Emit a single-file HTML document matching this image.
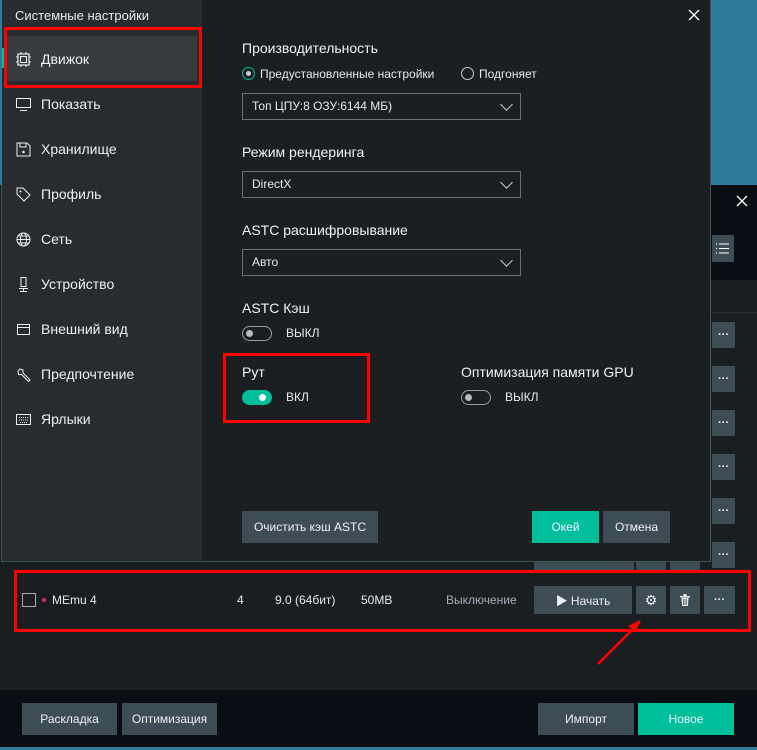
<!DOCTYPE html>
<html><head><meta charset="utf-8"><style>
*{margin:0;padding:0;box-sizing:border-box}
body{width:757px;height:750px;overflow:hidden;background:#1a1e21;font-family:"Liberation Sans","Noto Sans CJK SC",sans-serif;color:#e8eaeb;position:relative;font-size:13px}
.abs{position:absolute}
.btn{position:absolute;background:#3d4d56;color:#eef;display:flex;align-items:center;justify-content:center;font-size:12px}
.dots{width:23px;height:26px;left:712px;font-weight:bold;font-size:11px}
.nav{position:absolute;left:16px;display:flex;align-items:center;font-size:14px;color:#eef0f1}
.nav svg{margin-right:10px}
.lbl{position:absolute;font-size:14px;color:#f0f2f3}
.sel{position:absolute;left:242px;width:279px;height:27px;border:1px solid #6a6f73;font-size:12px;padding-left:9px;line-height:25px}
.sel:after{content:"";position:absolute;right:9px;top:6px;width:8px;height:8px;border-right:1.3px solid #ccc;border-bottom:1.3px solid #ccc;transform:rotate(45deg)}
.tog{position:absolute;width:30px;height:15px;border:1.5px solid #9a9ea1;border-radius:8px}
.tog i{position:absolute;left:3px;top:2.5px;width:7px;height:7px;border-radius:50%;background:#bbb}
.red{position:absolute;border:3px solid #f00}
</style></head><body>
<div class="abs" style="left:711px;top:0;width:46px;height:185px;background:#2e7b9a"></div>
<div class="abs" style="left:711px;top:185px;width:46px;height:95px;background:#0a0e14"></div>
<svg class="abs" style="left:736px;top:195px" width="12" height="12"><path d="M1 1L11 11M11 1L1 11" stroke="#fff" stroke-width="1.3"/></svg>
<div class="abs" style="left:712px;top:235px;width:22px;height:27px;background:#3d4d56"><svg width="22" height="27"><path d="M4 9h1M4 13.5h1M4 18h1" stroke="#fff" stroke-width="1.2"/><path d="M7 9h10M7 13.5h10M7 18h10" stroke="#fff" stroke-width="1"/></svg></div>
<div class="abs" style="left:711px;top:312px;width:46px;height:1px;background:#2a2f33"></div>
<div class="btn dots" style="top:322px">···</div>
<div class="btn dots" style="top:366px">···</div>
<div class="btn dots" style="top:410px">···</div>
<div class="btn dots" style="top:454px">···</div>
<div class="btn dots" style="top:498px">···</div>
<div class="btn dots" style="top:542px">···</div>
<div class="abs" style="left:534px;top:560px;width:100px;height:10px;background:#3d4d56"></div>
<div class="abs" style="left:636px;top:560px;width:30px;height:10px;background:#3d4d56"></div>
<div class="abs" style="left:670px;top:560px;width:30px;height:10px;background:#3d4d56"></div>

<div class="abs" style="left:22px;top:593px;width:14px;height:14px;border:1px solid #aaa"></div>
<div class="abs" style="left:42px;top:598px;width:4px;height:4px;border-radius:50%;background:#e0207a"></div>
<div class="abs" style="left:52px;top:593px;font-size:12px">MEmu 4</div>
<div class="abs" style="left:237px;top:593px;font-size:12px">4</div>
<div class="abs" style="left:275px;top:593px;font-size:12px">9.0 (64бит)</div>
<div class="abs" style="left:361px;top:593px;font-size:12px">50MB</div>
<div class="abs" style="left:446px;top:593px;font-size:12px;color:#aab">Выключение</div>
<div class="btn" style="left:534px;top:586px;width:98px;height:28px">▶&nbsp;Начать</div>
<div class="btn" style="left:636px;top:586px;width:30px;height:28px;font-size:14px">⚙</div>
<div class="btn" style="left:670px;top:586px;width:30px;height:28px"><svg width="10" height="12" viewBox="0 0 10 12"><rect x="0" y="2" width="10" height="1.5" fill="#eee"/><rect x="3.5" y="0" width="3" height="2" fill="#eee"/><path d="M1.5 4h7l-.6 8h-5.8z" fill="#eee"/><path d="M3.5 5v6M5 5v6M6.5 5v6" stroke="#3d4d56" stroke-width=".7"/></svg></div>
<div class="btn dots" style="left:704px;top:586px;width:31px;height:28px">···</div>
<div class="red" style="left:14px;top:570px;width:737px;height:62px"></div>
<svg class="abs" style="left:590px;top:612px" width="60" height="60"><path d="M8 52 L50 10" stroke="#f00" stroke-width="2.5"/><path d="M50 8 L38 14 L46 20z" fill="#f00"/></svg>

<div class="abs" style="left:0;top:690px;width:757px;height:57px;background:#0a0e14"></div>
<div class="abs" style="left:0;top:747px;width:757px;height:3px;background:#2e7b9a"></div>
<div class="btn" style="left:22px;top:703px;width:95px;height:32px">Раскладка</div>
<div class="btn" style="left:122px;top:703px;width:95px;height:32px">Оптимизация</div>
<div class="btn" style="left:538px;top:703px;width:96px;height:32px">Импорт</div>
<div class="btn" style="left:638px;top:703px;width:96px;height:32px;background:#00bf9a">Новое</div>

<div class="abs" style="left:1px;top:0;width:710px;height:562px;background:#1b1f22;border:1px solid #3a5a50;border-top:none"></div>
<div class="abs" style="left:2px;top:0;width:200px;height:561px;background:#282c30"></div>
<div class="abs" style="left:0;top:0;width:2px;height:185px;background:#2e7b9a"></div>
<div class="abs" style="left:15px;top:8px;font-size:13px">Системные настройки</div>
<div class="abs" style="left:7px;top:36px;width:190px;height:45px;background:#363b3f"></div>
<div class="abs" style="left:2px;top:48px;width:2px;height:20px;background:#00bf9a"></div>
<div class="red" style="left:4px;top:27px;width:198px;height:61px"></div>
<div class="nav" style="top:51px"><svg width="15" height="15"><rect x="2" y="2" width="11" height="11" fill="none" stroke="#eee" stroke-width="1.2"/><rect x="4.5" y="4.5" width="6" height="6" fill="none" stroke="#eee"/><path d="M0 5h2M0 10h2M13 5h2M13 10h2M5 0v2M10 0v2M5 13v2M10 13v2" stroke="#eee"/></svg>Движок</div>
<div class="nav" style="top:96px"><svg width="15" height="15"><rect x="0.5" y="1.5" width="14" height="9" fill="none" stroke="#eee"/><path d="M4 13.5h7" stroke="#eee"/></svg>Показать</div>
<div class="nav" style="top:141px"><svg width="15" height="15"><path d="M1 1h10l3 3v10H1z" fill="none" stroke="#eee"/><path d="M4 1v4h6V1" fill="none" stroke="#eee"/><circle cx="7.5" cy="10" r="1.3" fill="#eee"/></svg>Хранилище</div>
<div class="nav" style="top:186px"><svg width="15" height="15"><path d="M1 1h6l7 7-6 6-7-7z" fill="none" stroke="#eee"/><circle cx="4.5" cy="4.5" r="1" fill="#eee"/></svg>Профиль</div>
<div class="nav" style="top:231px"><svg width="15" height="15"><circle cx="7.5" cy="7.5" r="6.5" fill="none" stroke="#eee"/><ellipse cx="7.5" cy="7.5" rx="3" ry="6.5" fill="none" stroke="#eee"/><path d="M1 7.5h13M2 4h11M2 11h11" stroke="#eee"/></svg>Сеть</div>
<div class="nav" style="top:276px"><svg width="15" height="15"><rect x="5" y="0.5" width="5" height="9" fill="none" stroke="#eee"/><path d="M3 11.5h9M7.5 11.5v3M4 14.5h7" stroke="#eee"/></svg>Устройство</div>
<div class="nav" style="top:321px"><svg width="15" height="15"><rect x="1.5" y="2.5" width="12" height="10" fill="none" stroke="#eee"/><path d="M1.5 5.5h12" stroke="#eee"/></svg>Внешний вид</div>
<div class="nav" style="top:366px"><svg width="15" height="15"><path d="M2 4l2-2 3 1v3l7 7-1.5 1.5-7-7H2.5z" fill="none" stroke="#eee"/></svg>Предпочтение</div>
<div class="nav" style="top:411px"><svg width="15" height="15"><rect x="0.5" y="2.5" width="14" height="10" fill="none" stroke="#eee"/><path d="M3 5.5h9M3 8h9M4 10.5h7" stroke="#eee" stroke-dasharray="1 1"/></svg>Ярлыки</div>

<svg class="abs" style="left:688px;top:9px" width="12" height="12"><path d="M1 1L11 11M11 1L1 11" stroke="#fff" stroke-width="1.3"/></svg>
<div class="lbl" style="left:242px;top:40px">Производительность</div>
<div class="abs" style="left:242px;top:67px;width:13px;height:13px;border-radius:50%;border:1.5px solid #00bf9a"><div style="position:absolute;left:2.5px;top:2.5px;width:5px;height:5px;border-radius:50%;background:#ccc"></div></div>
<div class="abs" style="left:260px;top:67px;font-size:12px">Предустановленные настройки</div>
<div class="abs" style="left:461px;top:67px;width:13px;height:13px;border-radius:50%;border:1.3px solid #ccc"></div>
<div class="abs" style="left:479px;top:67px;font-size:12px">Подгоняет</div>
<div class="sel" style="top:93px">Топ ЦПУ:8 ОЗУ:6144 МБ)</div>
<div class="lbl" style="left:242px;top:144px">Режим рендеринга</div>
<div class="sel" style="top:171px">DirectX</div>
<div class="lbl" style="left:242px;top:222px">ASTC расшифровывание</div>
<div class="sel" style="top:249px">Авто</div>
<div class="lbl" style="left:242px;top:300px">ASTC Кэш</div>
<div class="tog" style="left:242px;top:326px"><i></i></div>
<div class="abs" style="left:286px;top:326px;font-size:12px">ВЫКЛ</div>
<div class="red" style="left:223px;top:353px;width:147px;height:70px"></div>
<div class="lbl" style="left:242px;top:364px">Рут</div>
<div class="tog" style="left:242px;top:390px;background:#00bf9a;border-color:#00bf9a"><i style="left:16px;background:#fff"></i></div>
<div class="abs" style="left:286px;top:390px;font-size:12px">ВКЛ</div>
<div class="lbl" style="left:461px;top:364px">Оптимизация памяти GPU</div>
<div class="tog" style="left:461px;top:390px"><i></i></div>
<div class="abs" style="left:505px;top:390px;font-size:12px">ВЫКЛ</div>
<div class="btn" style="left:242px;top:511px;width:136px;height:32px">Очистить кэш ASTC</div>
<div class="btn" style="left:532px;top:511px;width:67px;height:32px;background:#00bf9a">Окей</div>
<div class="btn" style="left:603px;top:511px;width:67px;height:32px">Отмена</div>
</body></html>
